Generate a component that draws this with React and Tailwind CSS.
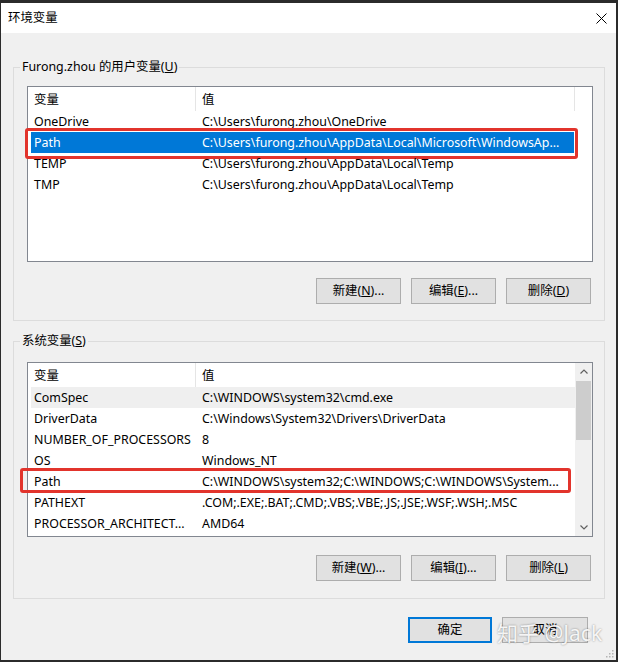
import React from 'react'

const userVars = [
  { name: 'OneDrive', value: 'C:\\Users\\furong.zhou\\OneDrive' },
  { name: 'Path', value: 'C:\\Users\\furong.zhou\\AppData\\Local\\Microsoft\\WindowsAp...', selected: true },
  { name: 'TEMP', value: 'C:\\Users\\furong.zhou\\AppData\\Local\\Temp' },
  { name: 'TMP', value: 'C:\\Users\\furong.zhou\\AppData\\Local\\Temp' },
]

const sysVars = [
  { name: 'ComSpec', value: 'C:\\WINDOWS\\system32\\cmd.exe', hover: true },
  { name: 'DriverData', value: 'C:\\Windows\\System32\\Drivers\\DriverData' },
  { name: 'NUMBER_OF_PROCESSORS', value: '8' },
  { name: 'OS', value: 'Windows_NT' },
  { name: 'Path', value: 'C:\\WINDOWS\\system32;C:\\WINDOWS;C:\\WINDOWS\\System...', marked: true },
  { name: 'PATHEXT', value: '.COM;.EXE;.BAT;.CMD;.VBS;.VBE;.JS;.JSE;.WSF;.WSH;.MSC' },
  { name: 'PROCESSOR_ARCHITECT...', value: 'AMD64' },
]

function Button({ label, accel, dots, primary, className = '' }) {
  return (
    <div
      className={`h-[26px] flex items-center justify-center bg-[#e1e1e1] ${
        primary ? 'border-2 border-[#0078d7]' : 'border border-[#adadad]'
      } ${className}`}
    >
      <span>
        {label}
        {accel && (
          <>
            (<u>{accel}</u>)
          </>
        )}
        {dots && '...'}
      </span>
    </div>
  )
}

function Header({ showEndDivider }) {
  return (
    <div className="h-[24px] flex items-center bg-white">
      <div className="w-[167px] pl-[6px] pt-[2px] shrink-0">变量</div>
      <div className="w-px h-full bg-[#e5e5e5]" />
      <div className="w-[378px] pl-[6px] pt-[2px] shrink-0">值</div>
      {showEndDivider && <div className="w-px h-full bg-[#e5e5e5]" />}
    </div>
  )
}

function Row({ v, rowWidth }) {
  let bg = ''
  if (v.selected) bg = 'bg-[#0078d7] text-white'
  else if (v.hover) bg = 'bg-[#efefef]'
  return (
    <div className={`relative ml-[3px] h-[21px] pt-[2px] flex items-center ${rowWidth} ${bg}`}>
      <div className="w-[165px] shrink-0 pl-[3px] whitespace-nowrap overflow-hidden">{v.name}</div>
      <div className="flex-1 pl-[6px] whitespace-nowrap overflow-hidden">{v.value}</div>
      {v.selected && (
        <div className="absolute -left-[6px] -right-[4px] -top-[4px] -bottom-[6px] border-[3px] border-[#e2342c] rounded-[3px]" />
      )}
      {v.marked && (
        <div className="absolute -left-[11px] right-[4px] -top-[3px] -bottom-[1px] border-[3px] border-[#e2342c] rounded-[3px]" />
      )}
    </div>
  )
}

function Chevron({ up }) {
  return (
    <svg width="8" height="5" viewBox="0 0 8 5">
      <path
        d={up ? 'M0.5 4.5 L4 1 L7.5 4.5' : 'M0.5 0.5 L4 4 L7.5 0.5'}
        fill="none"
        stroke="#606060"
        strokeWidth="1.2"
      />
    </svg>
  )
}

export default function App() {
  return (
    <div className="relative w-[618px] h-[662px] bg-[#2b2b2b] pt-[3px] pl-[1px] pr-[2px] pb-[2px] text-[12.4px] text-black font-['Noto_Sans','Noto_Sans_CJK_SC',sans-serif]">
      <div className="relative h-full flex flex-col bg-[#f0f0f0]">
        {/* Title bar */}
        <div className="h-[30px] bg-white flex items-center justify-between pl-[7px] pr-[9px] shrink-0">
          <span>环境变量</span>
          <svg width="11" height="11" viewBox="0 0 11 11">
            <path d="M0.5 0.5 L10.5 10.5 M10.5 0.5 L0.5 10.5" stroke="#000" strokeWidth="1" />
          </svg>
        </div>

        <div className="pt-[26px] pl-[12px] pr-[11px] flex flex-col">
          {/* User variables */}
          <fieldset className="border border-[#dcdcdc] pl-[13px] pr-[11px] pt-[11px] pb-[16px]">
            <legend className="-ml-[7px] px-[2px] leading-[16px]">
              Furong.zhou 的用户变量(<u>U</u>)
            </legend>
            <div className="h-[176px] border border-[#828790] bg-white">
              <Header showEndDivider />
              {userVars.map((v) => (
                <Row key={v.name} v={v} rowWidth="w-[543px]" />
              ))}
            </div>
            <div className="mt-[16px] pr-[2px] flex justify-end gap-[10px]">
              <Button label="新建" accel="N" dots className="w-[85px]" />
              <Button label="编辑" accel="E" dots className="w-[85px]" />
              <Button label="删除" accel="D" className="w-[85px]" />
            </div>
          </fieldset>

          {/* System variables */}
          <fieldset className="mt-[12px] border border-[#dcdcdc] pl-[13px] pr-[11px] pt-[13px] pb-[17px]">
            <legend className="-ml-[7px] px-[2px] leading-[16px]">
              系统变量(<u>S</u>)
            </legend>
            <div className="h-[175px] border border-[#828790] bg-white flex">
              <div className="flex-1">
                <Header />
                {sysVars.map((v) => (
                  <Row key={v.name + v.value} v={v} rowWidth="w-[544px]" />
                ))}
              </div>
              <div className="w-[17px] bg-[#f0f0f0] flex flex-col items-center">
                <div className="h-[17px] w-full flex items-center justify-center">
                  <Chevron up />
                </div>
                <div className="h-[59px] w-[15px] bg-[#cdcdcd] mt-px" />
                <div className="flex-1" />
                <div className="h-[17px] w-full flex items-center justify-center">
                  <Chevron />
                </div>
              </div>
            </div>
            <div className="mt-[18px] pr-[2px] flex justify-end gap-[10px]">
              <Button label="新建" accel="W" dots className="w-[85px]" />
              <Button label="编辑" accel="I" dots className="w-[85px]" />
              <Button label="删除" accel="L" className="w-[85px]" />
            </div>
          </fieldset>

          {/* OK / Cancel */}
          <div className="mt-[18px] pr-[17px] flex justify-end gap-[10px]">
            <Button label="确定" primary className="w-[84px]" />
            <Button label="取消" className="w-[86px]" />
          </div>
        </div>

        {/* resize grip */}
        <svg className="absolute right-[2px] bottom-[2px]" width="8" height="8" viewBox="0 0 8 8">
          <rect x="6" y="0" width="1.5" height="1.5" fill="#b4b4b4" />
          <rect x="3" y="3" width="1.5" height="1.5" fill="#b4b4b4" />
          <rect x="6" y="3" width="1.5" height="1.5" fill="#b4b4b4" />
          <rect x="0" y="6" width="1.5" height="1.5" fill="#b4b4b4" />
          <rect x="3" y="6" width="1.5" height="1.5" fill="#b4b4b4" />
          <rect x="6" y="6" width="1.5" height="1.5" fill="#b4b4b4" />
        </svg>
      </div>

      {/* watermark */}
      <div className="absolute left-[497px] top-[619px] text-[21px] leading-[28px] text-white/90 [text-shadow:0_0_2px_rgba(0,0,0,0.45)] whitespace-nowrap">
        知乎 @Jack
      </div>
    </div>
  )
}
